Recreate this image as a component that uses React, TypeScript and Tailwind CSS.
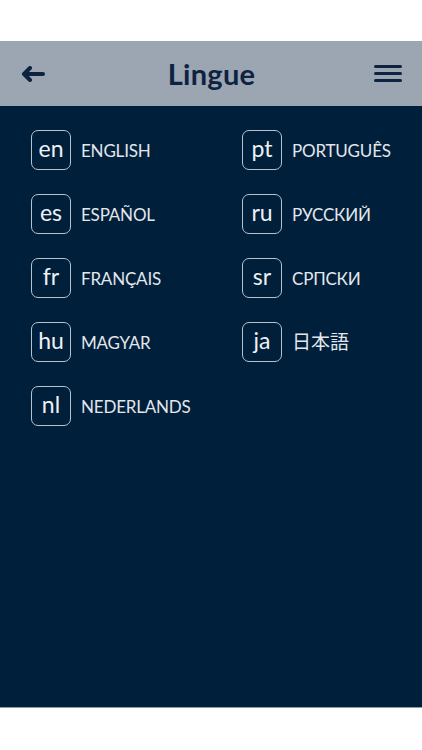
import React from "react";

const languages = [
  { code: "en", name: "ENGLISH" },
  { code: "pt", name: "PORTUGUÊS" },
  { code: "es", name: "ESPAÑOL" },
  { code: "ru", name: "РУССКИЙ" },
  { code: "fr", name: "FRANÇAIS" },
  { code: "sr", name: "СРПСКИ" },
  { code: "hu", name: "MAGYAR" },
  { code: "ja", name: "日本語" },
  { code: "nl", name: "NEDERLANDS" },
];

const BackArrow = () => (
  <svg width="24" height="16" viewBox="0 0 24 16" fill="none">
    <path d="M22 8H4" stroke="#0d2340" strokeWidth="4" strokeLinecap="round" />
    <path d="M9 2L3 8l6 6" stroke="#0d2340" strokeWidth="4" strokeLinecap="round" strokeLinejoin="round" />
  </svg>
);

const Hamburger = () => (
  <div className="flex flex-col gap-[4px] w-[28px]">
    <span className="block h-[3px] bg-[#0d2340] rounded-sm" />
    <span className="block h-[3px] bg-[#0d2340] rounded-sm" />
    <span className="block h-[3px] bg-[#0d2340] rounded-sm" />
  </div>
);

export default function App() {
  return (
    <div className="w-[422px] h-[750px] flex flex-col bg-white" style={{ fontFamily: "Lato, 'Noto Sans', 'Noto Sans CJK JP', sans-serif" }}>
      <div className="h-[41px] bg-white" />
      <header className="h-[65px] bg-[#9ba6b2] flex items-center justify-between pl-[21px] pr-[20px]">
        <button className="w-[28px] flex items-center"><BackArrow /></button>
        <h1 className="text-[29px] font-bold text-[#0d2340] leading-none tracking-[0.3px] pb-[1px]">Lingue</h1>
        <button><Hamburger /></button>
      </header>
      <main className="flex-1 bg-[#001f3b] pl-[31px] pt-[24px]">
        <div className="grid grid-cols-[211px_1fr] gap-y-[24px]">
          {languages.map((lang) => (
            <div key={lang.code} className="flex items-center gap-[10px]">
              <div className="w-[40px] h-[40px] rounded-[7px] border border-[#b9c2cc] flex items-center justify-center text-[23px] font-normal text-[#eef1f4] leading-none pb-[3px]">
                {lang.code}
              </div>
              <span className={lang.code === "ja" ? "text-[19px] font-normal text-[#e3e7ec]" : "text-[17px] font-normal text-[#e3e7ec] tracking-[-0.2px] pt-[1px]"}>
                {lang.name}
              </span>
            </div>
          ))}
        </div>
      </main>
      <div className="h-[1px] bg-[#8f9aa8]" />
      <div className="h-[42px] bg-white" />
    </div>
  );
}
